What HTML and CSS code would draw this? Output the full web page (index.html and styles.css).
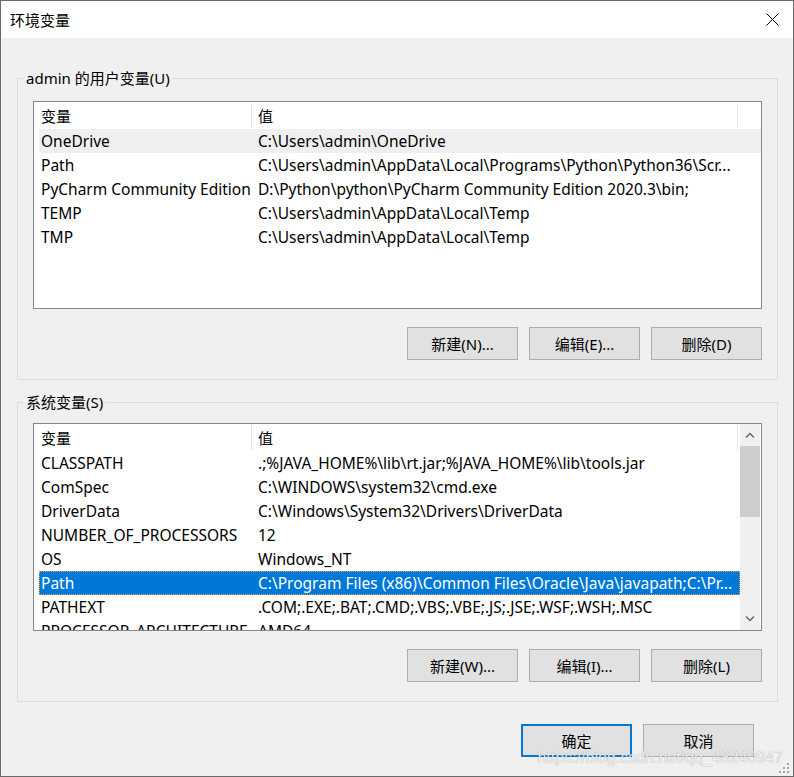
FILE: index.html
```html
<!DOCTYPE HTML>
<html>
<head>
<meta http-equiv="Content-Type" content="text/html; charset=utf-8">
<title>环境变量</title>
<link rel="stylesheet" href="styles.css">
</head>
<body>
	<div class="window">
		<div class="titlebar">
			<span class="title">环境变量</span>
			<svg class="close" width="13" height="13" viewBox="0 0 13 13"><path d="M0.5 0.5L12.5 12.5M12.5 0.5L0.5 12.5" stroke="#000" stroke-width="1" fill="none"/></svg>
		</div>

		<!-- 用户变量 -->
		<fieldset class="group">
			<legend>admin 的用户变量(U)</legend>
			<div class="list">
				<div class="view">
					<div class="row head"><span>变量</span><span>值</span></div>
					<div class="row hot"><span>OneDrive</span><span>C:\Users\admin\OneDrive</span></div>
					<div class="row"><span>Path</span><span>C:\Users\admin\AppData\Local\Programs\Python\Python36\Scr...</span></div>
					<div class="row"><span>PyCharm Community Edition</span><span>D:\Python\python\PyCharm Community Edition 2020.3\bin;</span></div>
					<div class="row"><span>TEMP</span><span>C:\Users\admin\AppData\Local\Temp</span></div>
					<div class="row"><span>TMP</span><span>C:\Users\admin\AppData\Local\Temp</span></div>
				</div>
			</div>
			<div class="actions">
				<button>新建(N)...</button>
				<button>编辑(E)...</button>
				<button>删除(D)</button>
			</div>
		</fieldset>

		<!-- 系统变量 -->
		<fieldset class="group sys">
			<legend>系统变量(S)</legend>
			<div class="list">
				<div class="view">
					<div class="row head"><span>变量</span><span>值</span></div>
					<div class="row"><span>CLASSPATH</span><span>.;%JAVA_HOME%\lib\rt.jar;%JAVA_HOME%\lib\tools.jar</span></div>
					<div class="row"><span>ComSpec</span><span>C:\WINDOWS\system32\cmd.exe</span></div>
					<div class="row"><span>DriverData</span><span>C:\Windows\System32\Drivers\DriverData</span></div>
					<div class="row"><span>NUMBER_OF_PROCESSORS</span><span>12</span></div>
					<div class="row"><span>OS</span><span>Windows_NT</span></div>
					<div class="row sel"><span>Path</span><span>C:\Program Files (x86)\Common Files\Oracle\Java\javapath;C:\Pr...</span></div>
					<div class="row"><span>PATHEXT</span><span>.COM;.EXE;.BAT;.CMD;.VBS;.VBE;.JS;.JSE;.WSF;.WSH;.MSC</span></div>
					<div class="row"><span>PROCESSOR_ARCHITECTURE</span><span>AMD64</span></div>
				</div>
				<div class="scroll">
					<div class="sbtn"><svg width="10" height="6" viewBox="0 0 10 6"><path d="M1 5.5L5 1.5L9 5.5" stroke="#606060" stroke-width="1.3" fill="none"/></svg></div>
					<div class="thumb"></div>
					<div class="track"></div>
					<div class="sbtn"><svg width="10" height="6" viewBox="0 0 10 6"><path d="M1 0.5L5 4.5L9 0.5" stroke="#606060" stroke-width="1.3" fill="none"/></svg></div>
				</div>
			</div>
			<div class="actions">
				<button>新建(W)...</button>
				<button>编辑(I)...</button>
				<button>删除(L)</button>
			</div>
		</fieldset>

		<div class="footer">
			<button class="ok">确定</button>
			<button>取消</button>
		</div>

		<div class="watermark">https://blog.csdn.net/qq_48240947</div>
		<svg class="grip" width="12" height="12" viewBox="0 0 12 12" fill="#a8a8a8">
			<rect x="9" y="1" width="2" height="2"/>
			<rect x="5" y="5" width="2" height="2"/><rect x="9" y="5" width="2" height="2"/>
			<rect x="1" y="9" width="2" height="2"/><rect x="5" y="9" width="2" height="2"/><rect x="9" y="9" width="2" height="2"/>
		</svg>
	</div>
</body>
</html>
```

FILE: styles.css
```css
body { margin: 0; padding: 0; font-family: "Noto Sans", "Noto Sans CJK SC", sans-serif; font-size: 15px; color: #000; }
.window { width: 794px; height: 777px; box-sizing: border-box; border: 1px solid #6b6b6b; background: #f0f0f0; position: relative; display: flex; flex-direction: column; }

/* 标题栏 */
.titlebar { height: 37px; flex: none; background: #fff; display: flex; align-items: center; justify-content: space-between; padding: 0 14px 0 9px; }
.title { font-size: 15px; line-height: 20px; }

/* 分组 */
.group { margin: 30px 15px 0 16px; padding: 13px 15px 19px; border: 1px solid #dcdcdc; min-width: 0; }
.group.sys { margin-top: 12px; padding-top: 11px; }
.group legend { padding: 0 2px; margin-left: -9px; line-height: 20px; }

/* 列表 */
.list { height: 208px; box-sizing: border-box; border: 1px solid #828790; background: #fff; display: flex; font-size: 15.5px; }
.view { flex: 1; min-width: 0; padding-left: 5px; overflow: hidden; }
.row { display: grid; grid-template-columns: 213px 486px; height: 24px; line-height: 24px; }
.row span { white-space: nowrap; overflow: hidden; padding-left: 2px; }
.row span + span { padding-left: 6px; }
.row.head { height: 27px; line-height: 26px; font-size: 15px; }
.row.head span { border-right: 1px solid #e5e5e5; margin: 1px 0 1px; }
.row.hot { background: #efefef; }
.row.sel { background: #0078d7; color: #fff; outline: 1px dotted #f59a55; outline-offset: -1px; }

/* 滚动条 */
.scroll { width: 20px; margin-right: 1px; background: #f0f0f0; display: flex; flex-direction: column; }
.sbtn { height: 22px; display: flex; align-items: center; justify-content: center; }
.thumb { height: 71px; background: #cdcdcd; }
.track { flex: 1; }

/* 按钮 */
button { font: inherit; color: #000; width: 111px; height: 33px; padding: 0; background: #e1e1e1; border: 1px solid #adadad; }
.actions { display: flex; justify-content: flex-end; gap: 11px; margin-top: 18px; }
.footer { display: flex; justify-content: flex-end; gap: 11px; margin: 22px 39px 0 0; }
.footer .ok { border: 2px solid #0078d7; }

.watermark { position: absolute; right: 10px; bottom: 9px; font-family: "Liberation Sans", Arial, sans-serif; font-size: 16px; color: rgba(255,255,255,0.85); text-shadow: 0 0 1px rgba(0,0,0,0.4); }
.grip { position: absolute; right: 3px; bottom: 2px; }
```
